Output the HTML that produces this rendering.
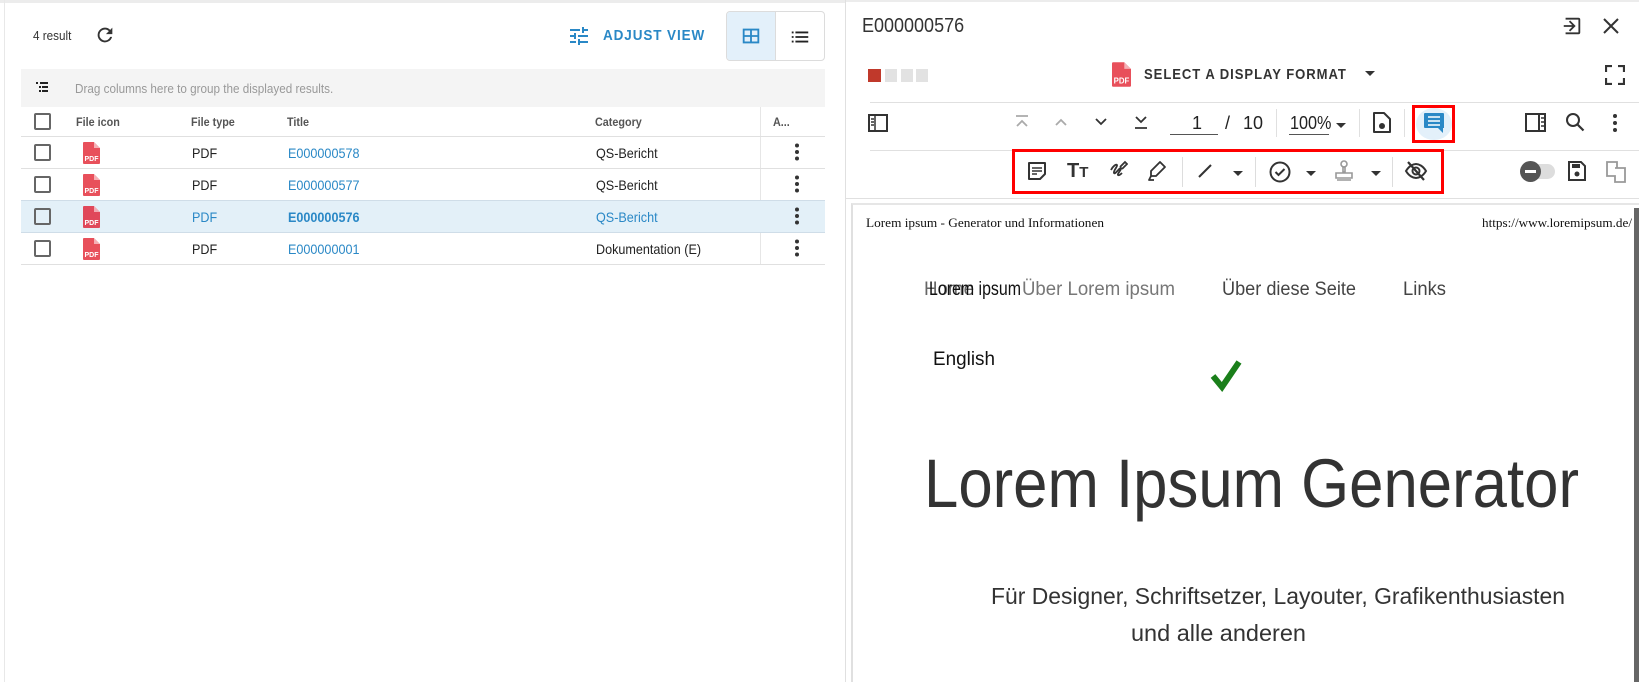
<!DOCTYPE html>
<html><head><meta charset="utf-8">
<style>
*{box-sizing:border-box;margin:0;padding:0}
body{width:1639px;height:682px;overflow:hidden;background:#fff;font-family:"Liberation Sans Narrow","Liberation Sans",sans-serif;color:#222;position:relative}
.a{position:absolute}
.t{position:absolute;white-space:nowrap}
.sx{transform:scaleX(.9);transform-origin:0 0}
.hd{font-size:12px;color:#555;font-weight:bold}
.cell{font-size:14px}
.blue{color:#2a88c6}
.cb{position:absolute;width:17px;height:17px;border:2px solid #666;border-radius:2px}
.hl{position:absolute;height:1px;background:#e0e0e0}
</style></head><body>
<div class="a" style="left:0;top:0;width:845px;height:3px;background:#ececec"></div>
<div class="a" style="left:4px;top:0;width:1px;height:682px;background:#e8e8e8"></div>
<div class="t sx" style="left:33px;top:28px;font-size:13px;color:#333">4 result</div>
<svg class="a" style="left:94px;top:24px" width="22" height="22" viewBox="0 0 24 24"><path d="M17.65 6.35A7.95 7.95 0 0 0 12 4a8 8 0 1 0 7.73 10h-2.08A6 6 0 1 1 12 6c1.66 0 3.14.69 4.22 1.78L13 11h7V4l-2.35 2.35z" fill="#333"/></svg>
<svg class="a" style="left:567px;top:24px" width="24" height="24" viewBox="0 0 24 24"><path d="M3 17v2h6v-2H3zM3 5v2h10V5H3zm10 16v-2h8v-2h-8v-2h-2v6h2zM7 9v2H3v2h4v2h2V9H7zm14 4v-2H11v2h10zm-6-4h2V7h4V5h-4V3h-2v6z" fill="#2a88c6"/></svg>
<div class="t blue sx" style="left:603px;top:27px;font-size:15px;font-weight:bold;letter-spacing:1px">ADJUST VIEW</div>
<div class="a" style="left:726px;top:11px;width:99px;height:50px;border:1px solid #dcdcdc;border-radius:4px;overflow:hidden">
 <div class="a" style="left:0;top:0;width:49px;height:48px;background:#e3f0fa;border-right:1px solid #dcdcdc"></div>
 <svg class="a" style="left:13px;top:13px" width="22" height="22" viewBox="0 0 24 24"><path d="M3 4h18v16H3z M5 6v5h6V6z M13 6v5h6V6z M5 13v5h6v-5z M13 13v5h6v-5z" fill="#2a88c6" fill-rule="evenodd"/></svg>
 <svg class="a" style="left:62px;top:14px" width="22" height="22" viewBox="0 0 24 24"><path d="M3 6h2v2H3zm4 0h14v2H7zM3 11h2v2H3zm4 0h14v2H7zM3 16h2v2H3zm4 0h14v2H7z" fill="#222"/></svg>
</div>
<div class="a" style="left:21px;top:69px;width:804px;height:38px;background:#f4f4f4"></div>
<svg class="a" style="left:35px;top:80px" width="14" height="14" viewBox="0 0 14 14"><path d="M1 2h2v2H1zM5 2h8v2H5zM4 6h2v2H4zM7 6h6v2H7zM4 10h2v2H4zM7 10h6v2H7z" fill="#222"/></svg>
<div class="t sx" style="left:75px;top:81px;font-size:13px;color:#999">Drag columns here to group the displayed results.</div>
<div class="cb" style="left:34px;top:113px"></div>
<div class="t hd sx" style="left:76px;top:115px">File icon</div>
<div class="t hd sx" style="left:191px;top:115px">File type</div>
<div class="t hd sx" style="left:287px;top:115px">Title</div>
<div class="t hd sx" style="left:595px;top:115px">Category</div>
<div class="a" style="left:760px;top:107px;width:1px;height:157px;background:#e6e6e6"></div>
<div class="t hd sx" style="left:773px;top:115px">A...</div>
<div class="hl" style="left:21px;top:136px;width:804px"></div>
<div class="a" style="left:21px;top:200px;width:804px;height:32px;background:#e3f0f8"></div>
<div class="hl" style="left:21px;top:168px;width:804px"></div>
<div class="hl" style="left:21px;top:200px;width:804px;background:#cfdde8"></div>
<div class="hl" style="left:21px;top:232px;width:804px;background:#cfdde8"></div>
<div class="hl" style="left:21px;top:264px;width:804px"></div>

<div class="cb" style="left:34px;top:144px"></div>
<svg class="a" style="left:83px;top:142px" width="17" height="22" viewBox="0 0 17 22"><path d="M1 0h10l6 6v15a1 1 0 0 1-1 1H1a1 1 0 0 1-1-1V1a1 1 0 0 1 1-1z" fill="#e8505b"/><path d="M11 0v6h6" fill="#fff" opacity=".55"/><text x="1.5" y="19" font-size="7" font-weight="bold" fill="#fff" font-family="Liberation Sans">PDF</text></svg>
<div class="t cell sx" style="left:192px;top:145px">PDF</div>
<div class="t cell blue sx" style="left:288px;top:145px">E000000578</div>
<div class="t cell sx" style="left:596px;top:145px">QS-Bericht</div>
<div class="cb" style="left:34px;top:176px"></div>
<svg class="a" style="left:83px;top:174px" width="17" height="22" viewBox="0 0 17 22"><path d="M1 0h10l6 6v15a1 1 0 0 1-1 1H1a1 1 0 0 1-1-1V1a1 1 0 0 1 1-1z" fill="#e8505b"/><path d="M11 0v6h6" fill="#fff" opacity=".55"/><text x="1.5" y="19" font-size="7" font-weight="bold" fill="#fff" font-family="Liberation Sans">PDF</text></svg>
<div class="t cell sx" style="left:192px;top:177px">PDF</div>
<div class="t cell blue sx" style="left:288px;top:177px">E000000577</div>
<div class="t cell sx" style="left:596px;top:177px">QS-Bericht</div>
<div class="cb" style="left:34px;top:208px"></div>
<svg class="a" style="left:83px;top:206px" width="17" height="22" viewBox="0 0 17 22"><path d="M1 0h10l6 6v15a1 1 0 0 1-1 1H1a1 1 0 0 1-1-1V1a1 1 0 0 1 1-1z" fill="#e0485a"/><path d="M11 0v6h6" fill="#fff" opacity=".55"/><text x="1.5" y="19" font-size="7" font-weight="bold" fill="#fff" font-family="Liberation Sans">PDF</text></svg>
<div class="t cell blue sx" style="left:192px;top:209px">PDF</div>
<div class="t cell blue sx" style="left:288px;top:209px;font-weight:bold">E000000576</div>
<div class="t cell blue sx" style="left:596px;top:209px">QS-Bericht</div>
<div class="cb" style="left:34px;top:240px"></div>
<svg class="a" style="left:83px;top:238px" width="17" height="22" viewBox="0 0 17 22"><path d="M1 0h10l6 6v15a1 1 0 0 1-1 1H1a1 1 0 0 1-1-1V1a1 1 0 0 1 1-1z" fill="#e8505b"/><path d="M11 0v6h6" fill="#fff" opacity=".55"/><text x="1.5" y="19" font-size="7" font-weight="bold" fill="#fff" font-family="Liberation Sans">PDF</text></svg>
<div class="t cell sx" style="left:192px;top:241px">PDF</div>
<div class="t cell blue sx" style="left:288px;top:241px">E000000001</div>
<div class="t cell sx" style="left:596px;top:241px">Dokumentation (E)</div>
<svg class="a" style="left:794px;top:143px" width="6" height="115" viewBox="0 0 6 115"><g fill="#333"><circle cx="3" cy="2.5" r="2"/><circle cx="3" cy="9" r="2"/><circle cx="3" cy="15.5" r="2"/><circle cx="3" cy="34.5" r="2"/><circle cx="3" cy="41" r="2"/><circle cx="3" cy="47.5" r="2"/><circle cx="3" cy="66.5" r="2"/><circle cx="3" cy="73" r="2"/><circle cx="3" cy="79.5" r="2"/><circle cx="3" cy="98.5" r="2"/><circle cx="3" cy="105" r="2"/><circle cx="3" cy="111.5" r="2"/></g></svg>

<div class="a" style="left:845px;top:0;width:1px;height:682px;background:#e0e0e0"></div>
<div class="a" style="left:846px;top:0;width:793px;height:2px;background:#ececec"></div>
<div class="t sx" style="left:862px;top:15px;font-size:20px;color:#333">E000000576</div>
<svg class="a" style="left:1561px;top:15px" width="22" height="22" viewBox="0 0 24 24"><path d="M5 3h14a2 2 0 0 1 2 2v14a2 2 0 0 1-2 2H5v-2h14V5H5z M3 11h9.2l-3.6-3.6L10 6l6 6-6 6-1.4-1.4 3.6-3.6H3z" fill="#333"/></svg>
<svg class="a" style="left:1602px;top:17px" width="18" height="18" viewBox="0 0 18 18"><path d="M2 2l14 14M16 2L2 16" stroke="#333" stroke-width="2"/></svg>
<div class="a" style="left:868px;top:69px;width:13px;height:13px;background:#c0392b"></div>
<div class="a" style="left:885px;top:69px;width:12px;height:13px;background:#e2e2e2"></div>
<div class="a" style="left:901px;top:69px;width:12px;height:13px;background:#e2e2e2"></div>
<div class="a" style="left:916px;top:69px;width:12px;height:13px;background:#e2e2e2"></div>
<svg class="a" style="left:1112px;top:62px" width="19" height="25" viewBox="0 0 17 22"><path d="M1 0h10l6 6v15a1 1 0 0 1-1 1H1a1 1 0 0 1-1-1V1a1 1 0 0 1 1-1z" fill="#e8505b"/><path d="M11 0v6h6" fill="#fff" opacity=".55"/><text x="1.5" y="19" font-size="7" font-weight="bold" fill="#fff" font-family="Liberation Sans">PDF</text></svg>
<div class="t" style="left:1144px;top:66px;font-size:15px;color:#333;font-weight:bold;letter-spacing:1.1px;transform:scaleX(.87);transform-origin:0 0">SELECT A DISPLAY FORMAT</div>
<svg class="a" style="left:1365px;top:71px" width="10" height="6"><path d="M0 0h10L5 5z" fill="#333"/></svg>
<svg class="a" style="left:1605px;top:65px" width="20" height="20" viewBox="0 0 20 20"><path d="M1 7V1h6M13 1h6v6M19 13v6h-6M7 19H1v-6" stroke="#333" stroke-width="2.2" fill="none"/></svg>
<div class="hl" style="left:870px;top:102px;width:769px"></div>
<svg class="a" style="left:868px;top:113px" width="20" height="20" viewBox="0 0 20 20"><rect x="1" y="2" width="18" height="16" stroke="#333" stroke-width="2" fill="none"/><path d="M7 2v16M3 6h3M3 9h3M3 12h3" stroke="#333" stroke-width="1.5"/></svg>
<svg class="a" style="left:1014px;top:114px" width="16" height="16" viewBox="0 0 16 16"><path d="M2 2h12M3 12l5-5 5 5" stroke="#aaa" stroke-width="1.8" fill="none"/></svg>
<svg class="a" style="left:1053px;top:114px" width="16" height="16" viewBox="0 0 16 16"><path d="M3 11l5-5 5 5" stroke="#aaa" stroke-width="1.8" fill="none"/></svg>
<svg class="a" style="left:1093px;top:114px" width="16" height="16" viewBox="0 0 16 16"><path d="M3 5l5 5 5-5" stroke="#333" stroke-width="1.8" fill="none"/></svg>
<svg class="a" style="left:1133px;top:114px" width="16" height="16" viewBox="0 0 16 16"><path d="M3 3l5 5 5-5M2 14h12" stroke="#333" stroke-width="1.8" fill="none"/></svg>
<div class="t" style="left:1192px;top:113px;font-size:18px;color:#222">1</div>
<div class="a" style="left:1170px;top:134px;width:48px;height:1px;background:#555"></div>
<div class="t" style="left:1225px;top:113px;font-size:18px;color:#222">/</div>
<div class="t" style="left:1243px;top:113px;font-size:18px;color:#222">10</div>
<div class="a" style="left:1276px;top:109px;width:1px;height:28px;background:#e0e0e0"></div>
<div class="t sx" style="left:1290px;top:113px;font-size:18px;color:#222">100%</div>
<div class="a" style="left:1289px;top:134px;width:40px;height:1px;background:#555"></div>
<svg class="a" style="left:1336px;top:123px" width="10" height="6"><path d="M0 0h10L5 5z" fill="#333"/></svg>
<div class="a" style="left:1359px;top:109px;width:1px;height:28px;background:#e0e0e0"></div>
<svg class="a" style="left:1372px;top:112px" width="20" height="22" viewBox="0 0 20 22"><path d="M2 1h10l6 6v13H2z" stroke="#333" stroke-width="2" fill="none" stroke-linejoin="round"/><circle cx="10" cy="14" r="3" fill="#333"/></svg>
<div class="a" style="left:1404px;top:109px;width:1px;height:28px;background:#e0e0e0"></div>
<div class="a" style="left:1412px;top:105px;width:43px;height:38px;border:3px solid #f00"></div>
<div class="a" style="left:1416px;top:108px;width:36px;height:32px;background:#e3f0fa;border-radius:50%"></div>
<svg class="a" style="left:1423px;top:112px" width="22" height="22" viewBox="0 0 22 22"><path d="M2 1h18a1 1 0 0 1 1 1v14h-1v5l-5-5H2a1 1 0 0 1-1-1V2a1 1 0 0 1 1-1z" fill="#2a88c6"/><path d="M5 5h12M5 9h12M5 13h12" stroke="#fff" stroke-width="1.6"/></svg>
<svg class="a" style="left:1525px;top:113px" width="21" height="19" viewBox="0 0 21 19"><rect x="1" y="1" width="19" height="17" stroke="#333" stroke-width="2" fill="none"/><path d="M14 1v17" stroke="#333" stroke-width="2"/><path d="M16 5h3M16 9h3M16 13h3" stroke="#333" stroke-width="1.5"/></svg>
<svg class="a" style="left:1565px;top:112px" width="20" height="20" viewBox="0 0 20 20"><circle cx="8" cy="8" r="6" stroke="#333" stroke-width="2" fill="none"/><path d="M12.5 12.5l6 6" stroke="#333" stroke-width="2.2"/></svg>
<svg class="a" style="left:1612px;top:113px" width="6" height="20"><circle cx="3" cy="3" r="2" fill="#333"/><circle cx="3" cy="10" r="2" fill="#333"/><circle cx="3" cy="17" r="2" fill="#333"/></svg>
<div class="hl" style="left:870px;top:150px;width:769px"></div>
<div class="a" style="left:1012px;top:149px;width:432px;height:45px;border:3px solid #f00"></div>
<svg class="a" style="left:1027px;top:161px" width="20" height="20" viewBox="0 0 20 20"><path d="M2 2h16v11l-5 5H2z" stroke="#333" stroke-width="2" fill="none" stroke-linejoin="round"/><path d="M5 7h10M5 10h10M5 13h5" stroke="#333" stroke-width="1.6"/></svg>
<div class="t" style="left:1067px;top:160px;font-size:20px;font-weight:bold;color:#333;font-family:'Liberation Sans',sans-serif">T<span style="font-size:15px">T</span></div>
<svg class="a" style="left:1108px;top:160px" width="20" height="22" viewBox="0 0 20 22"><path d="M3 10c2-4 5-6 6-5s-4 6-3 8 6-6 7-5-4 6-3 7 3-1 4-2M12 7l5-5 2 2-5 5" stroke="#333" stroke-width="1.8" fill="none"/></svg>
<svg class="a" style="left:1147px;top:160px" width="20" height="22" viewBox="0 0 20 22"><path d="M13 2l5 5-9 9H4v-5z M4 16l-2 4h5" stroke="#333" stroke-width="1.8" fill="none" stroke-linejoin="round"/></svg>
<div class="a" style="left:1182px;top:157px;width:1px;height:30px;background:#ddd"></div>
<svg class="a" style="left:1197px;top:163px" width="16" height="16"><path d="M2 14L14 2" stroke="#333" stroke-width="2"/></svg>
<svg class="a" style="left:1233px;top:171px" width="10" height="6"><path d="M0 0h10L5 5z" fill="#333"/></svg>
<div class="a" style="left:1255px;top:157px;width:1px;height:30px;background:#ddd"></div>
<svg class="a" style="left:1269px;top:161px" width="22" height="22" viewBox="0 0 22 22"><circle cx="11" cy="11" r="9.5" stroke="#333" stroke-width="2" fill="none"/><path d="M6.5 11l3 3 6-6" stroke="#333" stroke-width="2" fill="none"/></svg>
<svg class="a" style="left:1306px;top:171px" width="10" height="6"><path d="M0 0h10L5 5z" fill="#333"/></svg>
<svg class="a" style="left:1334px;top:160px" width="20" height="24" viewBox="0 0 20 24"><circle cx="10" cy="4" r="3" stroke="#999" stroke-width="1.6" fill="none"/><path d="M9 7h2v5H9zM2 13h16v5H2zM3 20h14" stroke="#999" stroke-width="1.6" fill="none"/></svg>
<svg class="a" style="left:1371px;top:171px" width="10" height="6"><path d="M0 0h10L5 5z" fill="#333"/></svg>
<div class="a" style="left:1392px;top:157px;width:1px;height:30px;background:#ddd"></div>
<svg class="a" style="left:1404px;top:160px" width="24" height="22" viewBox="0 0 24 22"><path d="M2 11c3-5 7-7 10-7s7 2 10 7c-3 5-7 7-10 7s-7-2-10-7z" stroke="#333" stroke-width="2" fill="none"/><circle cx="12" cy="11" r="3.5" stroke="#333" stroke-width="2" fill="none"/><path d="M4 2l16 18" stroke="#333" stroke-width="2.2"/></svg>
<div class="a" style="left:1520px;top:164px;width:35px;height:15px;border-radius:8px;background:#ddd"></div>
<div class="a" style="left:1520px;top:161px;width:21px;height:21px;border-radius:50%;background:#555"></div>
<div class="a" style="left:1525px;top:170px;width:11px;height:3px;background:#fff"></div>
<svg class="a" style="left:1567px;top:161px" width="19" height="21" viewBox="0 0 19 21"><path d="M2 1h12l4 4v14H2z" stroke="#333" stroke-width="2" fill="none"/><rect x="5" y="3" width="8" height="4" fill="#333"/><circle cx="10" cy="13" r="2.5" fill="#333"/></svg>
<svg class="a" style="left:1605px;top:160px" width="22" height="24" viewBox="0 0 22 24"><path d="M2 2h10v6h8v14H10v-6H2z M10 8h2" stroke="#999" stroke-width="1.8" fill="none"/></svg>
<div class="hl" style="left:846px;top:198px;width:793px"></div>

<div class="a" style="left:851px;top:203px;width:788px;height:479px;border-left:2px solid #e0e0e0;border-top:2px solid #e6e6e6"></div>
<div class="a" style="left:1634px;top:208px;width:5px;height:474px;background:#666"></div>
<svg class="a" style="left:853px;top:205px" width="781" height="477" viewBox="853 205 781 477" font-family="Liberation Sans,sans-serif">
 <text x="866" y="227" font-family="Liberation Serif,serif" font-size="13" fill="#111" textLength="238" lengthAdjust="spacingAndGlyphs">Lorem ipsum - Generator und Informationen</text>
 <text x="1482" y="227" font-family="Liberation Serif,serif" font-size="13" fill="#111" textLength="150" lengthAdjust="spacingAndGlyphs">https://www.loremipsum.de/</text>
 <text x="924" y="295" font-size="19" fill="#666" textLength="50" lengthAdjust="spacingAndGlyphs">Home</text>
 <text x="1022" y="295" font-size="19" fill="#777" textLength="153" lengthAdjust="spacingAndGlyphs">Über Lorem ipsum</text>
 <text x="929" y="295" font-size="19" fill="#111" textLength="92" lengthAdjust="spacingAndGlyphs">Lorem ipsum</text>
 <text x="1222" y="295" font-size="19" fill="#444" textLength="134" lengthAdjust="spacingAndGlyphs">Über diese Seite</text>
 <text x="1403" y="295" font-size="19" fill="#444" textLength="43" lengthAdjust="spacingAndGlyphs">Links</text>
 <text x="933" y="365" font-size="19" fill="#111" textLength="62" lengthAdjust="spacingAndGlyphs">English</text>
 <path d="M1213 376l9 11 17-25" stroke="#1a7f1a" stroke-width="6" fill="none"/>
 <text x="924" y="507" font-size="69" fill="#333" textLength="655" lengthAdjust="spacingAndGlyphs">Lorem Ipsum Generator</text>
 <text x="991" y="604" font-size="23" fill="#333" textLength="574" lengthAdjust="spacingAndGlyphs">Für Designer, Schriftsetzer, Layouter, Grafikenthusiasten</text>
 <text x="1131" y="641" font-size="23" fill="#333" textLength="175" lengthAdjust="spacingAndGlyphs">und alle anderen</text>
</svg>
</body></html>
